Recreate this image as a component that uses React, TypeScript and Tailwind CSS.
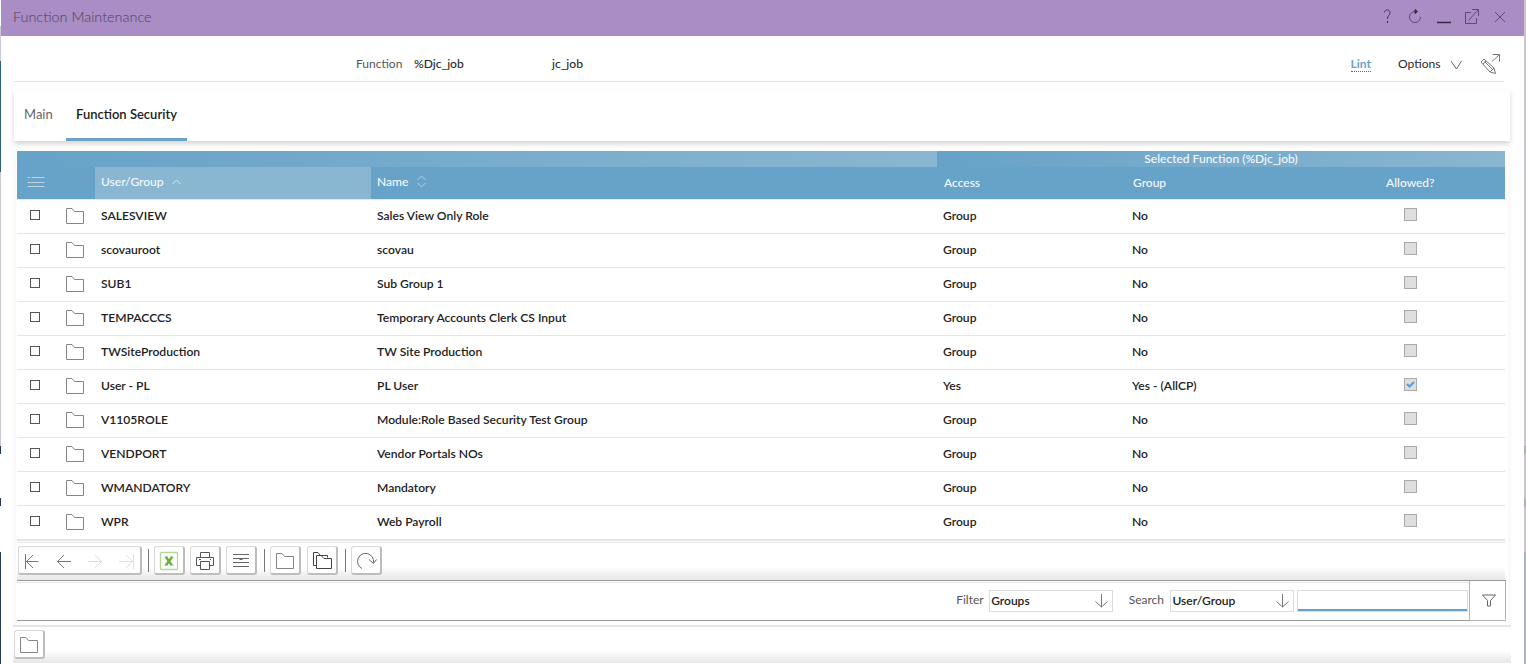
import React from "react";

const rows = [
  ["SALESVIEW", "Sales View Only Role", "Group", "No"],
  ["scovauroot", "scovau", "Group", "No"],
  ["SUB1", "Sub Group 1", "Group", "No"],
  ["TEMPACCCS", "Temporary Accounts Clerk CS Input", "Group", "No"],
  ["TWSiteProduction", "TW Site Production", "Group", "No"],
  ["User - PL", "PL User", "Yes", "Yes - (AllCP)"],
  ["V1105ROLE", "Module:Role Based Security Test Group", "Group", "No"],
  ["VENDPORT", "Vendor Portals NOs", "Group", "No"],
  ["WMANDATORY", "Mandatory", "Group", "No"],
  ["WPR", "Web Payroll", "Group", "No"],
];

function Folder() {
  return (
    <svg className="shrink-0" width="18" height="16" viewBox="0 0 18 16" fill="none" stroke="#858585">
      <path d="M.5 15.5V.5H6L8.5 3.5H17.5V15.5Z" />
    </svg>
  );
}

function ToolButton({ children }: { children: React.ReactNode }) {
  return (
    <button className="flex h-[29px] w-[31px] shrink-0 items-center justify-center rounded-[3px] border border-t-[#d9d9d9] border-r-2 border-b-2 border-l-[#d9d9d9] border-r-[#bdbdbd] border-b-[#bdbdbd] bg-white pt-px">
      {children}
    </button>
  );
}

function Separator() {
  return <span className="h-[23px] w-px shrink-0 bg-[#777]" />;
}

function TitleBar() {
  return (
    <header className="flex h-9 shrink-0 items-center bg-[#ab8dc6] pl-3">
      <h1 className="flex-1 pb-0.5 text-[14.4px] font-light leading-[34px] text-[#4b3d58]">Function Maintenance</h1>
      <svg width="140" height="36" viewBox="0 0 140 36" fill="none" stroke="#5d4a6c">
        <path d="M.5 12.5C.5 9 6 9 6 12.5C6 15.5 3.5 15 3.5 19" stroke="#44354f" />
        <path d="M3.5 21v2" stroke="#33283c" />
        <path d="M31 11.5A5.5 5.5 0 1 0 36.5 17" />
        <path d="M31 9.5L33.5 11.5L31 13.5Z" fill="#33283c" stroke="#33283c" />
        <path d="M53 22.5H67" stroke="#33283c" strokeWidth="1.5" />
        <path d="M87 12.5H81.5V23.5H92.5V18M84.5 20.5L94.5 9.5M88 9.5H94.5V16" />
        <path d="M111 12L121 22M121 12L111 22" />
      </svg>
    </header>
  );
}

function FunctionBar() {
  return (
    <div className="ml-[13px] mr-5 flex h-[46px] shrink-0 items-start border-b border-[#e5e5e5] text-[12px] leading-[18px] text-[#2b2b2b]">
      <span className="ml-[342px] mt-[19px] w-[58px] text-[#555]">Function</span>
      <span className="mt-[19px] w-[138px] text-[12.1px] font-medium">%Djc_job</span>
      <span className="mt-[19px] flex-1 text-[12.1px] font-medium">jc_job</span>
      <span className="mr-[27px] mt-[21px] border-b border-dotted border-[#2f77a8] font-bold leading-[14px] text-[#69a2c8]">Lint</span>
      <span className="mt-[19px] w-[52px] text-[12.1px]">Options</span>
      <svg width="54" height="34" viewBox="0 0 54 34" fill="none" stroke="#555" className="mt-3">
        <path d="M1 13L6.5 21L11.5 13" strokeWidth=".9" />
        <path d="M31 14L34 11L44 20L45.5 25.5L40 24ZM33 16L36 13M34.5 13.5L42.5 21.5M40 24L44 20M42 13.5L49 7M42.5 6.5H49.5V13.5" strokeWidth=".8" />
      </svg>
    </div>
  );
}

function Tabs() {
  return (
    <nav className="ml-[13px] mr-3.5 mt-2 flex h-[51px] shrink-0 bg-white text-[13px] leading-[49px] shadow-[0_3px_5px_rgba(0,0,0,0.17)]">
      <span className="ml-[10px] w-[42px] text-[#666]">Main</span>
      <span className="flex w-[121px] justify-center border-b-[3px] border-[#69a3c8] font-semibold text-[#222]">Function Security</span>
    </nav>
  );
}

const columns = "grid grid-cols-[49px_29px_276px_566px_189px_213px_166px]";

function DataTable() {
  return (
    <section className="text-[12px] font-medium text-[#222]">
      <div className="flex h-4 text-center leading-4 text-[#f4f9fc]">
        <div className="w-[920px] bg-linear-to-r from-[#67a2c8] to-[#89b6d0]" />
        <div className="flex-1 bg-linear-to-r from-[#67a2c8] to-[#89b6d0]">Selected Function (%Djc_job)</div>
      </div>
      <div className={columns + " h-8 bg-[#67a2c8] leading-[31px] text-[#f4f9fc]"}>
        <svg className="mt-[7px]" width="40" height="16" viewBox="0 0 40 16" stroke="#bad5e5">
          <path d="M10.5 3.5H13M14.5 3.5H27.5M10.5 8.5H27.5M10.5 12.5H27.5" />
        </svg>
        <span />
        <span className="flex h-8 items-center bg-[#89b7d1] pb-[3px] pl-[6px] leading-4">
          User/Group
          <svg className="ml-2" width="9" height="6" viewBox="0 0 9 6" fill="none" stroke="#d9e9f2"><path d="M.5 5L4.5 1L8.5 5" /></svg>
        </span>
        <span className="flex h-8 items-center pb-[3px] pl-[6px] leading-4">
          Name
          <svg className="ml-[9px]" width="9" height="13" viewBox="0 0 9 13" fill="none" stroke="#b3d0e3"><path d="M.5 5L4.5 1L8.5 5M.5 8L4.5 12L8.5 8" /></svg>
        </span>
        <span className="pl-[7px]">Access</span>
        <span className="pl-[7px]">Group</span>
        <span className="pl-[47px]">Allowed?</span>
      </div>
      {rows.map(([id, name, access, group]) => (
        <div key={id} className={columns + " h-[34px] items-center border-t border-[#e6e6e6] bg-white text-[12.1px] font-semibold leading-4"}>
          <span className="mb-[3px] ml-[13px] h-2.5 w-2.5 border border-[#555]" />
          <div className="flex pb-0.5"><Folder /></div>
          <span className="pb-px pl-[6px]">{id}</span>
          <span className="pb-px pl-[6px]">{name}</span>
          <span className="pb-px pl-[6px]">{access}</span>
          <span className="pb-px pl-[6px]">{group}</span>
          <span className="mb-[4px] ml-[65px] flex h-[13px] w-[13px] items-center justify-center border border-[#aaa] bg-[#dedede]">
            {access === "Yes" && (
              <svg width="9" height="9" viewBox="0 0 9 9" fill="none" stroke="#5b9bd5" strokeWidth="2"><path d="M1 4L3.5 6.5L8 2" /></svg>
            )}
          </span>
        </div>
      ))}
    </section>
  );
}

function Toolbar() {
  return (
    <div className="flex h-[37px] items-start bg-linear-to-b from-white from-65% to-[#e6e6e6] pt-[3px]">
      <div className="ml-px flex h-[29px] w-[124px] shrink-0 rounded-[3px] border border-t-[#d9d9d9] border-r-2 border-b-2 border-l-[#d9d9d9] border-r-[#bdbdbd] border-b-[#bdbdbd] bg-white">
        <svg width="121" height="26" viewBox="0 0 121 26" fill="none" stroke="#777">
          <path d="M6.5 7V22M7 14.5H19.5M14 8L7.5 14.5L14 21" />
          <path d="M38.5 14.5H52M45 8L38.5 14.5L45 21" />
          <path d="M69 14.5H83M76 8L82.5 14.5L76 21M100 14.5H113M107 8L113.5 14.5L107 21M114.5 7V22" stroke="#dedede" />
        </svg>
      </div>
      <div className="ml-[6px] mt-[3px] flex"><Separator /></div>
      <div className="ml-[5px] flex gap-[5px]">
        <ToolButton>
          <svg width="20" height="20" viewBox="0 0 20 20" fill="none">
            <rect x="1.5" y="1.5" width="17" height="17" rx="1" stroke="#b0da96" strokeWidth="1.3" />
            <path d="M7 6L12.5 14M13 6L7 14" stroke="#70ad47" strokeWidth="2.5" />
            <path d="M5.5 6H8.5M11.5 6H14.5M5.5 14H8.5M11.5 14H14.5" stroke="#70ad47" />
          </svg>
        </ToolButton>
        <ToolButton>
          <svg width="18" height="18" viewBox="0 0 18 18" fill="none" stroke="#555">
            <path d="M4.5 5V.5H13.5V5M4.5 13.5H.5V5.5H17.5V13.5H13.5M3 7.5H5M14 7.5H15M4.5 9.5H13.5V17.5H4.5Z" />
          </svg>
        </ToolButton>
        <ToolButton>
          <svg width="16" height="13" viewBox="0 0 16 13" fill="none" stroke="#666">
            <path d="M0 .5H16M0 4.5H16M0 8.5H16M0 12.5H16M6.5 5.5H9.5" />
          </svg>
        </ToolButton>
      </div>
      <div className="ml-[7px] mt-[3px] flex"><Separator /></div>
      <div className="ml-[5px] flex gap-[6px]">
        <ToolButton><Folder /></ToolButton>
        <ToolButton>
          <svg width="19" height="17" viewBox="0 0 19 17" fill="none" stroke="#444">
            <path d="M3 13.5H.5V.5H5L7.5 3.5H14.5V5.5M3.5 16.5V3.5H8L11 6.5H18.5V16.5Z" />
          </svg>
        </ToolButton>
      </div>
      <div className="ml-[7px] mt-[3px] flex"><Separator /></div>
      <div className="ml-[5px] flex">
        <ToolButton>
          <svg className="ml-px" width="20" height="18" viewBox="0 0 20 18" fill="none" stroke="#666">
            <path d="M5 16.5A8 8 0 1 1 16.5 10.5M12 7.5L16.5 11.5L19.5 7.5" />
          </svg>
        </ToolButton>
      </div>
    </div>
  );
}

function Select({ value }: { value: string }) {
  return (
    <div className="flex h-[22px] w-[124px] shrink-0 items-center justify-between border border-[#dcdcdc] bg-white pl-[1.5px] pr-1 font-semibold text-[#222]">
      {value}
      <svg width="13" height="14" viewBox="0 0 13 14" fill="none" stroke="#777">
        <path d="M6.5 0V13M.5 7.5L6.5 13L12.5 7.5" />
      </svg>
    </div>
  );
}

function FilterBar() {
  return (
    <div className="flex h-[41px] w-[1489px] border-t border-[#999] text-[12px] leading-5 text-[#555]">
      <div className="flex flex-1 items-start border-b border-[#999] pt-px">
        <div className="flex w-full justify-end border-t border-[#e5e5e5] pt-[7px]">
          <span className="mr-[5px]">Filter</span>
          <Select value="Groups" />
          <span className="ml-4 mr-[6px]">Search</span>
          <Select value="User/Group" />
          <div className="ml-[3px] mr-px h-[22px] w-[171px] border border-[#dcdcdc]">
            <div className="mt-[18px] h-0.5 bg-[#67a2c8]" />
          </div>
        </div>
      </div>
      <div className="flex w-[37px] justify-center border-x border-b border-[#b5b5b5] pl-0.5 pt-[13px]">
        <svg width="14" height="13" viewBox="0 0 14 13" fill="none" stroke="#666">
          <path d="M.5 1H13.5L8.5 6.5V12H5.5V6.5Z" />
        </svg>
      </div>
    </div>
  );
}

export default function App() {
  return (
    <main className="flex h-[664px] bg-white font-['Lato',sans-serif]">
      <div className="flex w-px flex-col bg-[#c9cad2]">
        <div className="h-[26px] bg-white" />
        <div className="mt-[35px] h-[111px] bg-[#2c6271]" />
        <div className="mt-[274px] h-2 bg-[#253b56]" />
        <div className="h-[44px] bg-white" />
        <div className="h-2 bg-[#253b56]" />
        <div className="h-[46px] bg-white" />
        <div className="flex-1 bg-[#253b56]" />
      </div>
      <div className="flex w-[1523px] flex-col">
        <TitleBar />
        <FunctionBar />
        <Tabs />
        <div className="ml-3 mt-[10px] w-[1498px] border-x-[3px] border-[#fafafa] pl-px">
          <div className="w-[1488px]">
            <DataTable />
            <div className="h-0.5 bg-[#e4e4e4]" />
            <div className="mt-px h-px bg-[#e8e8e8]" />
            <Toolbar />
          </div>
          <FilterBar />
          <div className="h-1" />
        </div>
        <div className="ml-3 h-[38px] w-[1498px] border-t-2 border-[#e5e5e5] bg-linear-to-b from-white from-65% to-[#e6e6e6] pl-px pt-[3px]">
          <ToolButton><Folder /></ToolButton>
        </div>
      </div>
      <div className="flex w-0.5 flex-col bg-[#cbc5ce]">
        <div className="mt-[446px] h-2 bg-[#b0afb5]" />
        <div className="mt-[45px] h-2 bg-[#b0afb5]" />
        <div className="mt-[45px] flex-1 bg-[#b0b0ba]" />
      </div>
    </main>
  );
}
